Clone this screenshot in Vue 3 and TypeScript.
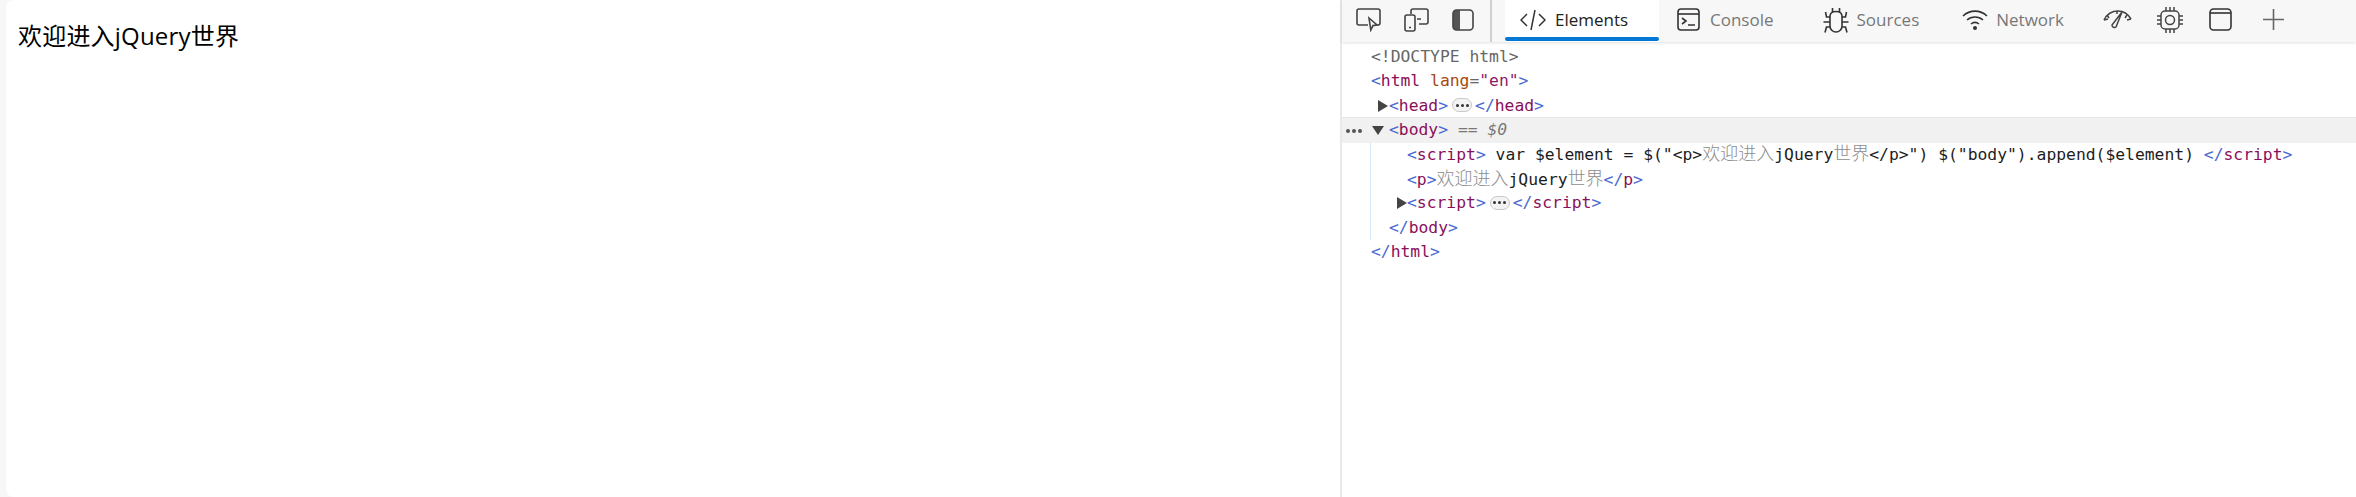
<script setup lang="ts">
const cjk = '欢迎进入'
</script>

<template>
  <div class="app">
    <main class="page">
      <p class="hello">欢迎进入jQuery世界</p>
    </main>
    <aside class="devtools">
      <header class="toolbar">
        <div class="tools">
          <svg class="ico" width="25" height="24" viewBox="0 0 25 24" fill="none" stroke="#444" stroke-width="1.6">
            <path d="M12 17H3a2 2 0 0 1-2-2V3a2 2 0 0 1 2-2h19a2 2 0 0 1 2 2v12a2 2 0 0 1-2 2h-1" />
            <path d="M13 10l8 7-4 .6-2.200 4.400z" />
          </svg>
          <svg class="ico" width="25" height="24" viewBox="0 0 25 24" fill="none" stroke="#444" stroke-width="1.6">
            <path d="M7 6V3a2 2 0 0 1 2-2h13a2 2 0 0 1 2 2v11a2 2 0 0 1-2 2h-7" />
            <rect x="1" y="7" width="10" height="16" rx="2" />
            <path d="M13 11h4M5 19.500h2" />
          </svg>
          <svg class="ico" width="22" height="22" viewBox="0 0 22 22" fill="none">
            <path d="M8 1H4a3 3 0 0 0-3 3v14a3 3 0 0 0 3 3h4z" fill="#555" />
            <rect x="1" y="1" width="20" height="20" rx="3.500" stroke="#444" stroke-width="1.6" />
          </svg>
        </div>
        <div class="tabs">
          <div class="tab active">
            <svg width="26" height="22" viewBox="0 0 26 22" fill="none" stroke="#333" stroke-width="1.5">
              <path d="M7 5l-6 6 6 6M19 5l6 6-6 6M15 1l-4 20" />
            </svg>
            <span>Elements</span>
          </div>
          <div class="tab console">
            <svg width="23" height="23" viewBox="0 0 23 23" fill="none" stroke="#333" stroke-width="1.6">
              <rect x="1" y="1" width="21" height="21" rx="3" />
              <path d="M1 6h21" />
              <path d="M5 10l4 3-4 3M11 17h7" />
            </svg>
            <span>Console</span>
          </div>
          <div class="tab sources">
            <svg width="26" height="26" viewBox="0 0 26 26" fill="none" stroke="#333" stroke-width="1.6">
              <path d="M7 9.500Q7 4.500 13 4.500T19 9.500V19a6 6 0 0 1-12 0z" />
              <path d="M9.500 1v4M16.500 1v4M7 10H3.500L2.500 5M19 10h3.500l1-5M7 15H0.500M19 15h6.500M7 20H3.500L2 25.500M19 20h3.500l1.500 5.500" />
            </svg>
            <span>Sources</span>
          </div>
          <div class="tab network">
            <svg width="26" height="22" viewBox="0 0 26 22" fill="none" stroke="#333" stroke-width="1.6">
              <path d="M1 7c7-6.500 17-6.500 24 0M5 11c4.500-4 11.500-4 16 0M9 15c2.500-2 5.500-2 8 0" />
              <circle cx="13" cy="19" r="2" fill="#333" stroke="none" />
            </svg>
            <span>Network</span>
          </div>
        </div>
        <div class="more">
          <svg class="perf" width="30" height="22" viewBox="0 0 30 22" fill="none" stroke="#444" stroke-width="1.5">
            <path d="M2 11C5 5 10 2 16 2c5 0 10 3 13 8" />
            <path d="M2 11l4-1M5 6l2 3M15 2v3M25 6l-2 3M29 10l-4 1" />
            <path d="M20 3l-6 15a2.500 2.500 0 0 1-4-2z" />
          </svg>
          <svg class="mem" width="28" height="28" viewBox="0 0 28 28" fill="none" stroke="#444" stroke-width="1.5">
            <rect x="5" y="5" width="18" height="18" rx="4" />
            <circle cx="14" cy="14" r="4.500" />
            <path d="M10 1v4M14 1v4M18 1v4M10 23v4M14 23v4M18 23v4M1 10h4M1 14h4M1 18h4M23 10h4M23 14h4M23 18h4" />
          </svg>
          <svg class="win" width="23" height="23" viewBox="0 0 23 23" fill="none" stroke="#333" stroke-width="1.6">
            <rect x="1" y="1" width="21" height="21" rx="3.500" />
            <path d="M1 5h21" />
          </svg>
          <svg class="plus" width="21" height="21" viewBox="0 0 21 21" fill="none" stroke="#666" stroke-width="1.6">
            <path d="M10.500 0v21M0 10.500h21" />
          </svg>
        </div>
      </header>

      <section class="tree">
        <div class="row lv0"><span class="doc">&lt;!DOCTYPE html&gt;</span></div>
        <div class="row lv0"><span class="br">&lt;</span><span class="tag">html</span> <span class="an">lang</span><span class="doc">=</span><span class="av">"en"</span><span class="br">&gt;</span></div>
        <div class="row lv1 arrowed">
          <i class="tri right"></i><span class="br">&lt;</span><span class="tag">head</span><span class="br">&gt;</span><span class="pill"><b></b><b></b><b></b></span><span class="br">&lt;/</span><span class="tag">head</span><span class="br">&gt;</span>
        </div>
        <div class="row lv1 selected">
          <span class="dots"><b></b><b></b><b></b></span>
          <i class="tri down"></i><span class="br">&lt;</span><span class="tag">body</span><span class="br">&gt;</span><em class="eq"> == $0</em>
        </div>
        <div class="nested">
          <div class="row lv2"><span class="br">&lt;</span><span class="tag">script</span><span class="br">&gt;</span><span class="code"> var $element = $("&lt;p&gt;<span class="cjk">{{ cjk }}</span>jQuery<span class="cjk">世界</span>&lt;/p&gt;") $("body").append($element) </span><span class="br">&lt;/</span><span class="tag">script</span><span class="br">&gt;</span></div>
          <div class="row lv2 para"><span class="br">&lt;</span><span class="tag">p</span><span class="br">&gt;</span><span class="cjk">{{ cjk }}</span><span class="code">jQuery</span><span class="cjk">世界</span><span class="br">&lt;/</span><span class="tag">p</span><span class="br">&gt;</span></div>
          <div class="row lv2 arrowed"><i class="tri right"></i><span class="br">&lt;</span><span class="tag">script</span><span class="br">&gt;</span><span class="pill"><b></b><b></b><b></b></span><span class="br">&lt;/</span><span class="tag">script</span><span class="br">&gt;</span></div>
          <div class="row lv1"><span class="br">&lt;/</span><span class="tag">body</span><span class="br">&gt;</span></div>
        </div>
        <div class="row lv0"><span class="br">&lt;/</span><span class="tag">html</span><span class="br">&gt;</span></div>
      </section>
    </aside>
  </div>
</template>

<style scoped>
.app {
  display: flex;
  height: 497px;
  width: 2356px;
  background: #f7f7f7;
  overflow: hidden;
}
.page {
  width: 1334px;
  margin-left: 6px;
  background: #fff;
  border-top-left-radius: 8px;
  border-bottom-left-radius: 8px;
}
.hello {
  margin: 0;
  padding: 20px 0 0 12px;
  font: 24px/32px "Open Sans", "Noto Sans CJK SC", sans-serif;
  letter-spacing: 0.2px;
  color: #000;
}
.devtools {
  flex: 1;
  min-width: 0;
  background: #fff;
  border-left: 2px solid #e9e9e9;
}
.toolbar {
  display: flex;
  align-items: stretch;
  height: 42px;
  background: #f7f7f7;
  box-shadow: 0 1px 3px rgba(0, 0, 0, 0.12);
  position: relative;
}
.tools {
  display: flex;
  align-items: center;
  gap: 23px;
  width: 150px;
  padding: 0 0 3px 14px;
  box-sizing: border-box;
  border-right: 2px solid #cfcfcf;
}
.ico { display: block; flex: none; }
.tabs {
  display: flex;
  margin-left: 13px;
}
.tab {
  display: flex;
  align-items: center;
  gap: 8px;
  height: 42px;
  padding-bottom: 3px;
  box-sizing: border-box;
  font: 17px "Open Sans", sans-serif;
  color: #777;
}
.tab svg { flex: none; }
.tab.active {
  width: 154px;
  padding-left: 15px;
  gap: 9px;
  background: #fff;
  color: #222;
  position: relative;
}
.tab.active::after {
  content: "";
  position: absolute;
  left: 0;
  right: 0;
  bottom: 1px;
  height: 4px;
  border-radius: 2px;
  background: #0078d4;
}
.console { margin-left: 18px; gap: 10px; }
.sources { margin-left: 49px; }
.network { margin-left: 43px; }
.more {
  display: flex;
  align-items: center;
  padding-bottom: 3px;
  margin-left: 38px;
}
.mem { margin-left: 24px; }
.win { margin-left: 25px; }
.plus { margin-left: 31px; }

.tree {
  padding-top: 3px;
  font: 16.35px/24.4px "DejaVu Sans Mono", monospace;
  white-space: pre;
}
.row {
  height: 24.4px;
  position: relative;
  box-sizing: border-box;
}
.para { padding-top: 1px; }
.lv0 { padding-left: 29px; }
.lv1 { padding-left: 47px; }
.lv2 { padding-left: 65px; }
.selected {
  background: #f1f1f1;
  box-shadow: 0 -1px 0 #e6e6e6;
}
.nested {
  border-left: 1px solid #d8e6f5;
  margin-left: 28px;
}
.nested .lv1 { padding-left: 18px; }
.nested .lv2 { padding-left: 36px; }
.doc { color: #666; }
.br { color: #4a69d0; }
.tag { color: #8a0f5a; }
.an { color: #a8480c; }
.av { color: #8a1a6a; }
.code { color: #1d1d1d; }
.cjk { color: #8d8d8d; font: 300 18px/0 "Noto Sans CJK SC", sans-serif; }
.eq { color: #777; font-style: italic; }

.tri {
  position: absolute;
  width: 0;
  height: 0;
  display: block;
}
.tri.right {
  top: 6px;
  border-left: 10px solid #444;
  border-top: 6px solid transparent;
  border-bottom: 6px solid transparent;
}
.lv1 .tri.right { left: 36px; }
.lv2 .tri.right { left: 26px; }
.tri.down {
  left: 30px;
  top: 8px;
  border-top: 9px solid #444;
  border-left: 6px solid transparent;
  border-right: 6px solid transparent;
}
.pill {
  display: inline-flex;
  align-items: center;
  justify-content: center;
  gap: 2px;
  box-sizing: border-box;
  width: 20px;
  height: 14px;
  margin: 0 3px 0 4px;
  border: 1px solid #c8c8c8;
  border-radius: 7px;
  background: #f3f3f3;
  vertical-align: 4px;
}
.pill b, .dots b {
  width: 3px;
  height: 3px;
  border-radius: 50%;
  background: #333;
}
.dots {
  position: absolute;
  left: 4px;
  top: 11px;
  display: flex;
  gap: 2px;
}
.dots b { width: 4px; height: 4px; background: #555; }
</style>
